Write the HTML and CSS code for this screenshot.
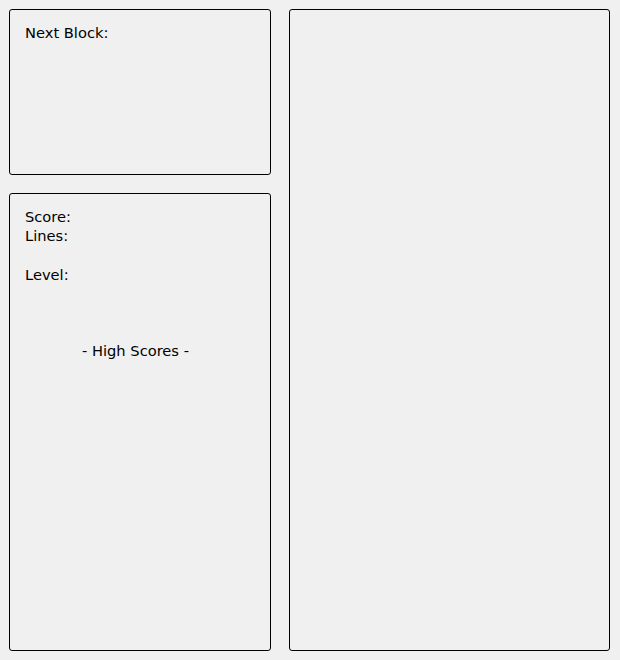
FILE: index.html
```html
<!DOCTYPE html>
<html>
<head>
<meta charset="utf-8">
<link rel="stylesheet" href="styles.css">
</head>
<body>
<div class="app">
  <div class="side">
    <div class="panel next">
      <div class="line">Next Block:</div>
    </div>
    <div class="panel stats">
      <div class="line">Score:</div>
      <div class="line">Lines:</div>
      <div class="line">&nbsp;</div>
      <div class="line">Level:</div>
      <div class="scores-title">- High Scores -</div>
    </div>
  </div>
  <div class="panel board"></div>
</div>
</body>
</html>
```
FILE: styles.css
```css
html, body {
  margin: 0;
  padding: 0;
  background: #f0f0f0;
}
body {
  font-family: "DejaVu Sans", sans-serif;
  font-size: 14.67px;
  line-height: 19.3px;
  color: #000;
}
.app {
  box-sizing: border-box;
  width: 620px;
  height: 660px;
  padding: 9px 10px 9px 9px;
  display: flex;
  gap: 18px;
}
.side {
  width: 262px;
  display: flex;
  flex-direction: column;
  gap: 18px;
}
.panel {
  box-sizing: border-box;
  border: 1px solid #000;
  border-radius: 3px;
  padding: 13px 15px;
}
.next {
  height: 166px;
}
.stats {
  flex: 1;
}
.board {
  flex: 1;
}
.scores-title {
  margin-top: 57px;
  text-align: center;
  padding-right: 9px;
}
```
